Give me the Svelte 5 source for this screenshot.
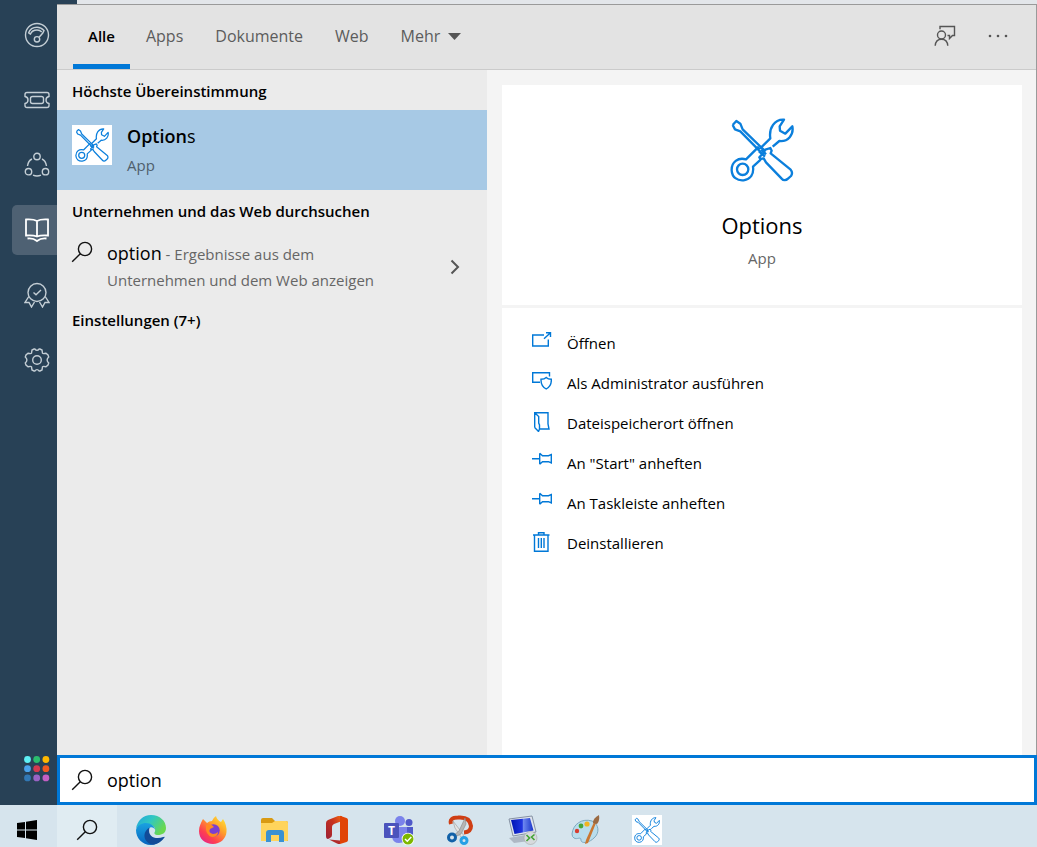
<script lang="ts">
  let query = $state("option");
  let activeTab = $state("Alle");

  const tabs = ["Alle", "Apps", "Dokumente", "Web"];

  const sideItems = [
    { label: "Dashboard", icon: "gauge" },
    { label: "Tickets", icon: "ticket" },
    { label: "Netzwerk", icon: "share" },
    { label: "Wissen", icon: "book", active: true },
    { label: "Auszeichnungen", icon: "badge" },
    { label: "Einstellungen", icon: "gear" },
  ];

  const actions = [
    { label: "Öffnen", icon: "open" },
    { label: "Als Administrator ausführen", icon: "admin" },
    { label: "Dateispeicherort öffnen", icon: "folder" },
    { label: 'An "Start" anheften', icon: "pin" },
    { label: "An Taskleiste anheften", icon: "pin" },
    { label: "Deinstallieren", icon: "trash" },
  ];

  const dots = ["#5ff0f5", "#2bbd6e", "#ffb800", "#4ba3ec", "#d43a50", "#f2591f", "#3278b5", "#9a63c4", "#c45fc4"];

  const taskApps = ["Edge", "Firefox", "Explorer", "Office", "Teams", "Snipping Tool", "Remotedesktop", "Paint", "Options"];
</script>

{#snippet tools(size: number)}
  <svg class="tools" width={size} height={size} viewBox="0 0 192 192" aria-hidden="true">
    <path d="M8 21 L19 9 L31 17 L38 34 L104 98 M8 21 L15 34 L31 40 L96 106" />
    <path d="M90 92 L121 61 C116 30 134 3 162 5 L149 25 L150 38 L166 47 L187 25 C192 50 174 72 148 69 L128 86" />
    <path d="M106 95 L121 90 L125 98 L122 106 L182 155 C187 161 187 168 183 174 L174 182 C168 188 160 188 155 182 L108 133 L101 121 L91 123 L88 118 L100 105 Z" />
    <path d="M88 94 L84 88 L48 124 C24 117 4 132 5 157 C6 178 22 189 41 187 C62 184 72 168 69 146 L92 125" />
    <circle cx="38" cy="154" r="17" />
    <path d="M87 100 L105 116 M94 94 L108 109" />
  </svg>
{/snippet}

{#snippet magnifier()}
  <svg class="line dark" width="22" height="22" viewBox="0 0 22 22" aria-hidden="true">
    <circle cx="14" cy="8" r="6.6" />
    <path d="M9.3 12.7 L1.2 20.8" />
  </svg>
{/snippet}

<div class="desktop">
  <div class="workspace">
    <nav class="sidebar" aria-label="Navigation">
      {#each sideItems as item}
        <button class="side-item" class:active={item.active} aria-label={item.label}>
          <svg class="line" width="26" height="26" viewBox="0 0 26 26" aria-hidden="true">
            {#if item.icon === "gauge"}
              <circle cx="13" cy="13" r="11.5" />
              <path d="M4.5 11 C6 7 9.5 5.2 13 5.2 C16 5.2 18 6.2 20 8.5 L18.8 11 L15.3 15" />
              <path d="M4.5 11 L6.5 12 C7.5 9.500 10 8 13 8 Q16 8 17.800 10" />
              <circle cx="13" cy="17.3" r="2.7" />
            {:else if item.icon === "ticket"}
              <path d="M3 5.5 H23 Q25 5.5 25 7.5 V9.5 Q22 10 22 13 Q22 16 25 16.5 V18.5 Q25 20.5 23 20.5 H3 Q1 20.5 1 18.5 V16.5 Q4 16 4 13 Q4 10 1 9.5 V7.5 Q1 5.5 3 5.5 Z" />
              <rect x="6.5" y="9.5" width="13" height="7" rx="2" />
            {:else if item.icon === "share"}
              <circle cx="13" cy="4.5" r="3.2" />
              <circle cx="4.5" cy="19.7" r="3.2" />
              <circle cx="21.5" cy="19.7" r="3.2" />
              <path d="M3.5 14 C4 10.5 6 7.8 8 7 M18 7 C20.2 8 22 10.8 22.5 14 M9 23.2 Q13 24.8 17 23.2" />
            {:else if item.icon === "book"}
              <path d="M13 4 Q9.5 2 2 2.5 V18.5 Q9.5 18 13 19.5 Q16.5 18 24 18.5 V2.500 Q16.500 2 13 4 V19.500 M3.500 21.500 Q9 20.800 13 24 Q17 20.800 22.500 21.500" />
            {:else if item.icon === "badge"}
              <circle cx="13" cy="10.500" r="9" />
              <path d="M9.500 10.500 L12 12.800 L17 8 M4.800 14.500 L1 20.500 L5 20.500 L7.500 25 L10.500 20 M21.200 14.500 L25 20.500 L21 20.500 L18.500 25 L15.500 20 M10.500 20 L7.500 25 M15.500 20 L18.500 25" />
            {:else}
              <circle cx="13" cy="13" r="4.300" />
              <path d="M10 2 H10.800 Q13 4.800 15.200 2 H16 L18 3 L18.500 6.200 Q19 7 22 6.200 L24 8 L24.700 10 Q21.500 13 24.700 16 L24 18 L22 19.800 Q19 19 18.500 19.800 L18 23 L16 24 H15.200 Q13 21.200 10.800 24 H10 L8 23 L7.500 19.800 Q7 19 4 19.800 L2 18 L1.300 16 Q4.500 13 1.300 10 L2 8 L4 6.200 Q7 7 7.500 6.200 L8 3 Z" />
            {/if}
          </svg>
        </button>
      {/each}
      <button class="side-item launcher" aria-label="Anwendungen">
        <svg width="26" height="26" viewBox="0 0 26 26" aria-hidden="true">
          {#each dots as color, i}
            <circle cx={3.5 + (i % 3) * 9.2} cy={3.5 + Math.floor(i / 3) * 9.2} r="3.4" fill={color} />
          {/each}
        </svg>
      </button>
    </nav>

    <main class="panel">
      <header class="tabs">
        {#each tabs as tab}
          <button class="tab" class:selected={activeTab === tab} onclick={() => (activeTab = tab)}>{tab}</button>
        {/each}
        <button class="tab more">
          Mehr
          <svg width="13" height="7" viewBox="0 0 13 7" aria-hidden="true"><path d="M0 0 H13 L6.500 7 Z" fill="#555" /></svg>
        </button>
        <div class="tools-right">
          <button class="icon-btn" aria-label="Feedback">
            <svg class="line gray" width="22" height="22" viewBox="0 0 22 22" aria-hidden="true">
              <path d="M6 4.200 V1.500 H20.500 V10.500 H18.500 L15.500 13.500 V10.500 H13.500" />
              <circle cx="7.500" cy="10" r="4" />
              <path d="M1.200 20.800 C1.500 16.500 4 14.200 7.500 14.200 C11 14.200 13.500 16.500 13.800 20.800" />
            </svg>
          </button>
          <button class="icon-btn" aria-label="Optionen">
            <svg width="20" height="4" viewBox="0 0 20 4" fill="#555" aria-hidden="true">
              <circle cx="2" cy="2" r="1.300" /><circle cx="10" cy="2" r="1.300" /><circle cx="18" cy="2" r="1.300" />
            </svg>
          </button>
        </div>
      </header>

      <div class="content">
        <section class="results">
          <h2>Höchste Übereinstimmung</h2>
          <button class="best">
            <span class="tile">{@render tools(34)}</span>
            <span class="best-text">
              <span class="best-name"><b>Option</b>s</span>
              <span class="kind">App</span>
            </span>
          </button>
          <h2>Unternehmen und das Web durchsuchen</h2>
          <button class="web">
            {@render magnifier()}
            <span class="web-text"><span class="term">option</span> - Ergebnisse aus dem Unternehmen und dem Web anzeigen</span>
            <svg class="chevron" width="10" height="16" viewBox="0 0 10 16" aria-hidden="true"><path d="M1.500 1.500 L8 8 L1.500 14.500" /></svg>
          </button>
          <h2>Einstellungen (7+)</h2>
        </section>

        <section class="details">
          <div class="card hero">
            {@render tools(64)}
            <h1>Options</h1>
            <p>App</p>
          </div>
          <ul class="card actions">
            {#each actions as action}
              <li>
                <button>
                  <svg class="line blue" width="20" height="20" viewBox="0 0 20 20" aria-hidden="true">
                    {#if action.icon === "open"}
                      <path d="M12 3 H.7 V14 H16.300 V7.500 M12 6.800 L18.500 .7 M14 .7 H18.500 V5" />
                    {:else if action.icon === "admin"}
                      <path d="M17.500 4.500 V.7 H.7 V10.200 H8 M14.200 5.500 Q16 7.300 19.300 7.300 C19.600 12 18 15 14.200 17 C10.500 15 8.800 12 9 7.300 Q12.500 7.300 14.200 5.500 Z" />
                    {:else if action.icon === "folder"}
                      <path d="M2.700 15.500 V.7 H16 V12 L17 17 H7.500 M2.700 .7 L6.700 4.500 V11 L7.500 13 V17 L6.500 19.500 L2.700 15.500" />
                    {:else if action.icon === "pin"}
                      <path d="M0 6.700 H7.500 M7.700 1.200 V12.200 M7.700 1.200 L10.500 3.700 H16.500 L19.300 2.500 V11 L16.500 9.700 H10.500 L7.700 12.200" />
                    {:else}
                      <path d="M1 3 H17.500 M6.500 3 V.7 H12 V3 M2.500 3 V19.200 H16 V3 M6.500 6 V16 M9.300 6 V16 M12 6 V16" />
                    {/if}
                  </svg>
                  {action.label}
                </button>
              </li>
            {/each}
          </ul>
        </section>
      </div>

      <label class="search">
        {@render magnifier()}
        <input type="text" bind:value={query} aria-label="Suche" />
      </label>
    </main>
  </div>

  <footer class="taskbar">
    <button class="task start" aria-label="Start">
      <svg width="20" height="20" viewBox="0 0 20 20" aria-hidden="true"><path d="M0 3 L8 1.900 V9.500 H0 Z M9 1.700 L20 0 V9.500 H9 Z M0 10.500 H8 V18.100 L0 17 Z M9 10.500 H20 V20 L9 18.300 Z" /></svg>
    </button>
    <button class="task find" aria-label="Suchen">{@render magnifier()}</button>
    {#each taskApps as app}
      <button class="task" aria-label={app}>
        {#if app === "Options"}
          <span class="tile small">{@render tools(26)}</span>
        {:else}
          <svg width="30" height="30" viewBox="0 0 30 30" aria-hidden="true">
            {#if app === "Edge"}
              <defs>
                <linearGradient id="edgeTop" x1="0" y1="0" x2="1" y2=".5"><stop offset="0" stop-color="#20a4df" /><stop offset=".5" stop-color="#30c7c3" /><stop offset="1" stop-color="#6ad84f" /></linearGradient>
                <linearGradient id="edgeLeft" x1="0" y1="0" x2="0" y2="1"><stop offset="0" stop-color="#1aa2e1" /><stop offset="1" stop-color="#0764bf" /></linearGradient>
              </defs>
              <path d="M0 14 C1 6 7 0 15 0 C24 0 30 6 30 13 C30 18 26 20 22 20 C19 20 17.500 18.500 19 16.500 C20 13 17 9 11 9 C6 9 1 11 0 14 Z" fill="url(#edgeTop)" />
              <path d="M0 15 C1 10 6 8 10 8 C15 8 18.500 11 19 14.500 Q17 11.500 14 12.500 C11 15 11 20 16 23 C20 25 25 23 27.500 22.500 C25 27 20 30 15 30 C6 30 0 23 0 15 Z" fill="url(#edgeLeft)" />
              <path d="M13.500 12.500 C5 18 8 28 17 29.800 C22 29 26 26 28.500 22.500 Q29 21.500 27.500 22 C20 25 11 22 13.500 12.500 Z" fill="#124b98" />
            {:else if app === "Firefox"}
              <defs><linearGradient id="fox" x1="1" y1="0" x2=".2" y2="1"><stop offset="0" stop-color="#fff13d" /><stop offset=".4" stop-color="#ffa329" /><stop offset=".75" stop-color="#ff404f" /><stop offset="1" stop-color="#e52389" /></linearGradient></defs>
              <path d="M5 4 L9 8 Q11 6 14 6 Q15 3 18 1 Q19 5 23 7 L25 4 Q29 10 28.500 17 C28 24 22 29 15 29 C7 29 1 24 1 16 C1 11 3 8 5 4 Z" fill="url(#fox)" />
              <circle cx="15.500" cy="15.500" r="6.200" fill="#7b3fd1" />
              <path d="M8 10 Q13 8 16 12 L12 14 Q10 18 15 19 Q18 19 20 17 Q20 22 14 22 Q7 20 8 10 Z" fill="#ff8a22" />
            {:else if app === "Explorer"}
              <path d="M1 5 Q1 3 3 3 H12 L15 6 H26 Q28 6 28 8 V26 H1 Z" fill="#d99a12" />
              <path d="M1 8 H12 L15 6 H26 Q28 6 28 8 V25 Q28 26 27 26 H1 Z" fill="#ffd45c" />
              <path d="M6 27 V18 Q6 15 9 15 H21 Q24 15 24 18 V27 H19 V20 H11 V27 Z" fill="#3a91d3" />
            {:else if app === "Office"}
              <defs><linearGradient id="office" x1="1" y1="0" x2="0" y2="1"><stop offset="0" stop-color="#f36a12" /><stop offset=".4" stop-color="#c8321e" /><stop offset="1" stop-color="#9b2035" /></linearGradient></defs>
              <path d="M7 24.500 L18 25.500 V29 Q16 29 15 28.500 Z" fill="#b12a2a" />
              <path d="M4 8 Q4 6 6 5 L16 1 L20 1 V6 L12 9 Q10 10 10 12 V20 Q10 22 8 23 L6 24 Q4 24 4 21 Z" fill="url(#office)" />
              <path d="M18 .8 L24.500 3 Q26 3.500 26 5 V25 Q26 26.500 24.500 27 L18 29 Z" fill="#e04306" />
            {:else if app === "Teams"}
              <circle cx="16" cy="6" r="5" fill="#7b83eb" /><circle cx="25" cy="7.500" r="3.500" fill="#5059c9" />
              <path d="M20 12 H29 V20 Q29 25 23 25 Z" fill="#5059c9" />
              <path d="M9 12 H23 V21 Q22 28 15 28 Q9 28 8 22 Z" fill="#7b83eb" />
              <rect x="0" y="8" width="15" height="15" rx="1" fill="#4b53bc" />
              <text x="7.500" y="20" text-anchor="middle" class="teams-letter">T</text>
              <circle cx="24" cy="24" r="6.300" fill="#fff" /><circle cx="24" cy="24" r="5.500" fill="#7db700" />
              <path d="M21 24 L23.300 26.200 L27.300 22" fill="none" stroke="#fff" stroke-width="1.500" />
            {:else if app === "Snipping Tool"}
              <path d="M5 9 Q3 2.500 12 2.500 Q24 1.500 25 11 Q25 17 18 17.500" fill="none" stroke="#cf3e14" stroke-width="4" />
              <path d="M7 6 L17 19 L18 24 L15 22 L9 13 Z" fill="#e4e4e4" stroke="#999" stroke-width=".6" />
              <path d="M19 3 L20 9 L15 19 L9 22 L8 20 L13 16 Z" fill="#b5b5b5" stroke="#888" stroke-width=".6" />
              <circle cx="6" cy="22.500" r="3.500" fill="none" stroke="#1161a8" stroke-width="3" />
              <circle cx="18" cy="25.500" r="3" fill="none" stroke="#25a0e5" stroke-width="3" />
            {:else if app === "Remotedesktop"}
              <defs><linearGradient id="rdp"><stop offset="0" stop-color="#0014b4" /><stop offset=".5" stop-color="#2035e0" /><stop offset=".55" stop-color="#6d87f0" /><stop offset="1" stop-color="#1733c8" /></linearGradient></defs>
              <path d="M1 4 L24 1 L28 17 L5 21 Z" fill="#e0e5ee" stroke="#8591a3" />
              <path d="M3 5 L22 3 L25.500 15.500 L6.500 19 Z" fill="url(#rdp)" />
              <path d="M1 23 L17 20 L21 26 L6 28 Z" fill="#aeb8c4" />
              <circle cx="22.500" cy="23" r="6.500" fill="#d6dadd" stroke="#aaa" stroke-width=".6" />
              <path d="M18.500 20 L21.500 23 L18.500 26 M26.500 19.500 L23.500 22 L26.500 25" fill="none" stroke="#42a433" stroke-width="1.600" />
            {:else}
              <path d="M2 19 C3 9 12 3 22 6 C29 9 30 18 24 23 C19 28 11 29 11 25 C11 21 7 25 4 23 Q2 22 2 19 Z" fill="#b9ddec" stroke="#7da9bf" />
              <circle cx="7" cy="16" r="2.200" fill="#d73c2f" /><circle cx="11" cy="11" r="2.400" fill="#47a53a" /><circle cx="17" cy="9" r="2.600" fill="#f1b421" />
              <path d="M26 8 L18 28 L15 29 L16 25 L24 7 Z" fill="#c97731" />
              <path d="M23 8 Q23 3 29 0 Q30 6 27 9 Z" fill="#9b6a42" />
            {/if}
          </svg>
        {/if}
      </button>
    {/each}
  </footer>
</div>

<style>
  :global(body) {
    margin: 0;
  }
  .desktop {
    display: flex;
    flex-direction: column;
    min-height: 100vh;
    font-family: "Open Sans", "Noto Sans", sans-serif;
    font-size: 15px;
    line-height: 20px;
    color: #000;
  }
  button {
    font: inherit;
    color: inherit;
    background: none;
    border: none;
    padding: 0;
    text-align: left;
    cursor: pointer;
  }
  h1,
  h2,
  p,
  ul {
    margin: 0;
    padding: 0;
    list-style: none;
  }
  svg {
    display: block;
    flex: none;
  }
  .line {
    fill: none;
    stroke: #c4ced5;
    stroke-width: 1.4;
  }
  .dark {
    stroke: #111;
  }
  .gray {
    stroke: #555;
  }
  .blue {
    stroke: #0078d7;
  }
  .tools {
    fill: none;
    stroke: #0b7fdc;
    stroke-width: 7;
    stroke-linejoin: round;
  }

  .workspace {
    flex: 1;
    display: flex;
    padding-top: 4px;
    background: linear-gradient(90deg, #284156 77px, #e3e6ea 77px);
  }
  .sidebar {
    display: flex;
    flex-direction: column;
    gap: 15px;
    width: 45px;
    padding: 6px 0 11px 12px;
    background: #284156;
  }
  .side-item {
    display: flex;
    align-items: center;
    justify-content: center;
    height: 50px;
    padding-left: 5px;
    border-radius: 5px 0 0 5px;
  }
  .side-item.active {
    background: #4e6173;
  }
  .side-item.active .line {
    stroke: #fff;
    stroke-width: 1.8;
  }
  .launcher {
    margin-top: auto;
  }

  .panel {
    flex: 1;
    display: flex;
    flex-direction: column;
    border-top: 1px solid #9a9a9a;
    border-right: 1px solid #9a9a9a;
    background: #ebebeb;
  }
  .tabs {
    display: flex;
    height: 64px;
    padding: 0 24px 0 16px;
    border-bottom: 1px solid #cbcbcb;
    background: #e3e3e3;
    color: #5c5c5c;
    font-size: 16px;
  }
  .tab {
    padding: 0 16px 2px;
    border-top: 5px solid transparent;
    border-bottom: 5px solid transparent;
  }
  .selected {
    padding: 0 15px 2px;
    border-bottom-color: #0078d7;
    color: #000;
    font-size: 15px;
    font-weight: 600;
  }
  .more {
    display: flex;
    align-items: center;
    gap: 8px;
  }
  .tools-right {
    display: flex;
    align-items: center;
    gap: 24px;
    margin-left: auto;
    padding-bottom: 2px;
  }
  .icon-btn {
    padding: 4px;
  }

  .content {
    flex: 1;
    display: flex;
  }
  .results {
    width: 430px;
    flex: none;
  }
  h2 {
    padding: 11px 15px 9px;
    font-size: 15px;
    font-weight: 600;
  }
  .best {
    display: flex;
    gap: 15px;
    width: 100%;
    height: 80px;
    padding: 15px;
    background: #a7c9e5;
  }
  .tile {
    display: flex;
    align-items: center;
    justify-content: center;
    width: 40px;
    height: 40px;
    background: #fff;
  }
  .tile.small {
    width: 30px;
    height: 30px;
  }
  .best-text {
    display: flex;
    flex-direction: column;
    gap: 8px;
  }
  .best-name {
    font-size: 18px;
    line-height: 22px;
  }
  b {
    font-weight: 600;
  }
  .kind {
    color: #50606d;
  }
  .web {
    display: flex;
    gap: 14px;
    width: 100%;
    padding: 11px 27px 6px 14px;
    color: #666;
  }
  .web-text {
    flex: 1;
    max-width: 290px;
    line-height: 26px;
  }
  .term {
    font-size: 18px;
    line-height: 24px;
    color: #000;
  }
  .chevron {
    align-self: center;
    margin-left: auto;
    fill: none;
    stroke: #555;
    stroke-width: 2;
  }

  .details {
    flex: 1;
    display: flex;
    flex-direction: column;
    gap: 3px;
    padding: 15px 14px 0 15px;
    background: #f4f4f4;
  }
  .card {
    background: #fff;
  }
  .hero {
    display: flex;
    flex-direction: column;
    align-items: center;
    padding: 33px 0 37px;
  }
  h1 {
    margin: 28px 0 8px;
    font-size: 22px;
    line-height: 30px;
    font-weight: 400;
  }
  .hero p {
    color: #666;
  }
  .actions {
    flex: 1;
    padding: 14px 30px;
  }
  .actions button {
    display: flex;
    align-items: flex-start;
    gap: 15px;
    width: 100%;
    height: 40px;
    padding-bottom: 8px;
    line-height: 22px;
  }
  .actions li {
    padding-top: 10px;
    height: 30px;
  }

  .search {
    display: flex;
    align-items: center;
    gap: 14px;
    height: 44px;
    margin-right: -1px;
    padding: 0 11px;
    border: 3px solid #0078d7;
    background: #fff;
  }
  .search input {
    flex: 1;
    min-width: 0;
    padding: 0;
    border: none;
    outline: none;
    font: inherit;
    font-size: 18px;
    line-height: 24px;
  }

  .taskbar {
    display: flex;
    height: 42px;
    background: #d6e4ed;
  }
  .task {
    display: flex;
    align-items: center;
    justify-content: center;
    width: 62px;
    padding-top: 7px;
  }
  .start {
    width: 57px;
    padding-right: 3px;
  }
  .find {
    width: 60px;
    margin-right: 3px;
    background: #e0ecf2;
  }
  .teams-letter {
    fill: #fff;
    font-size: 12px;
    font-weight: 700;
  }
</style>
